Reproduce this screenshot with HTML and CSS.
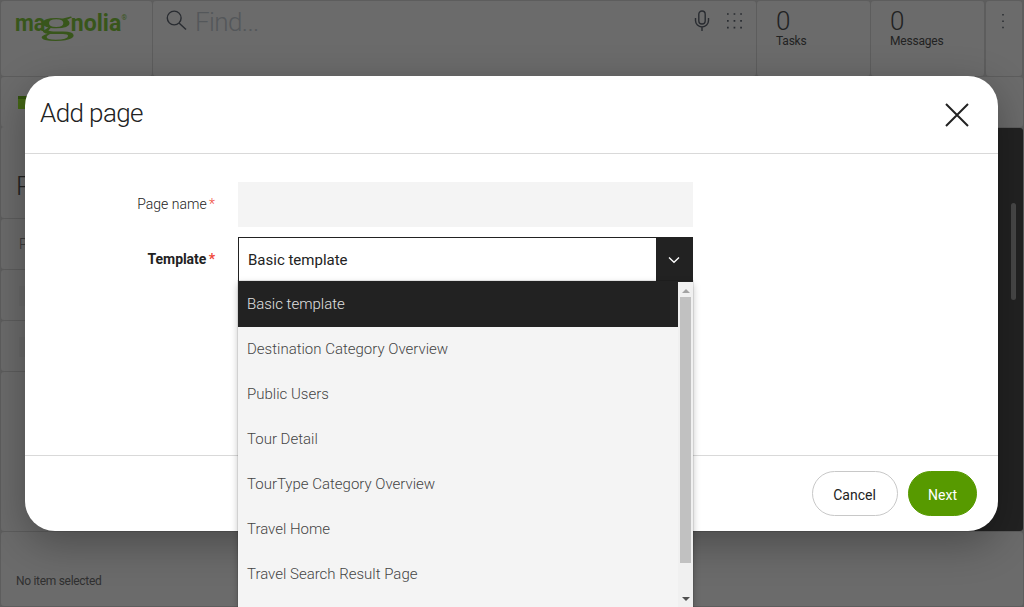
FILE: index.html
```html
<!DOCTYPE html>
<html lang="en">
<head>
<meta charset="utf-8">
<title>Add page</title>
<link rel="stylesheet" href="styles.css">
</head>
<body>
<div class="shell">
  <header class="topbar">
    <div class="tile brand">
      <svg class="logo" width="112" height="32" viewBox="0 0 112 32" role="img" aria-label="magnolia">
        <text class="logo-sans" x="-1" y="19.500" textLength="30.500" lengthAdjust="spacingAndGlyphs">ma</text>
        <text class="logo-serif" transform="translate(22.500 22.500) scale(2.150 1)" x="0" y="0">g</text>
        <text class="logo-sans" x="54.800" y="19.500" textLength="50.500" lengthAdjust="spacingAndGlyphs">nolia</text>
        <text class="logo-mark" x="105.500" y="9">®</text>
      </svg>
    </div>
    <div class="tile search">
      <svg class="search-icon" width="22" height="22" viewBox="0 0 22 22"><circle cx="8.2" cy="8" r="6.9"/><path d="M13 13l7 6.5"/></svg>
      <span class="find">Find...</span>
      <svg class="mic" width="16" height="22" viewBox="0 0 16 22"><rect x="4.8" y="1" width="6.4" height="13" rx="3.2"/><path d="M1.500 8v2.500a6.500 6.500 0 0 0 13 0V8M8 17v4"/></svg>
      <svg class="dots" width="18" height="18" viewBox="0 0 18 18"><path d="M1 2h15M1 8.800h15M1 15.600h15"/></svg>
    </div>
    <div class="tile counter"><span class="num">0</span><span class="cap">Tasks</span></div>
    <div class="tile counter"><span class="num">0</span><span class="cap">Messages</span></div>
    <div class="tile more"><svg width="4" height="18" viewBox="0 0 4 18"><path d="M2 1v15"/></svg></div>
  </header>
  <main class="work">
    <section class="browser">
      <div class="tile tab"><span class="folder"></span></div>
      <div class="tile heading">Pages</div>
      <div class="tile row-head">Page</div>
      <div class="tile row"><span class="check"></span></div>
      <div class="tile row"><span class="check"></span></div>
      <div class="tile rest"></div>
    </section>
    <aside class="side">
      <div class="tile side-top"></div>
      <div class="actions"><span class="thumb"></span></div>
    </aside>
  </main>
  <footer class="tile status">No item selected</footer>
</div>
<div class="overlay">
  <div class="dialog" role="dialog" aria-label="Add page">
    <div class="dialog-head">
      <h1>Add page</h1>
      <svg class="close" width="26" height="26" viewBox="0 0 26 26"><path d="M2 2l22 22M24 2L2 24"/></svg>
    </div>
    <div class="dialog-body">
      <div class="field"><span class="label">Page name <b>*</b></span><div class="input"></div></div>
      <div class="field">
        <span class="label strong">Template <b>*</b></span>
        <div class="select">
          <span class="value">Basic template</span>
          <span class="toggle"><svg width="12" height="8" viewBox="0 0 12 8"><path d="M1 1.500l5 4.800 5-4.800"/></svg></span>
          <div class="menu">
            <ul class="options">
              <li class="active">Basic template</li>
              <li>Destination Category Overview</li>
              <li>Public Users</li>
              <li>Tour Detail</li>
              <li>TourType Category Overview</li>
              <li>Travel Home</li>
              <li>Travel Search Result Page</li>
            </ul>
            <div class="scroll">
              <svg width="8" height="4" viewBox="0 0 8 4"><path class="up" d="M0 4l4-4 4 4z"/></svg>
              <span class="scroll-thumb"></span>
              <svg width="8" height="4" viewBox="0 0 8 4"><path class="down" d="M0 0l4 4 4-4z"/></svg>
            </div>
          </div>
        </div>
      </div>
    </div>
    <div class="dialog-foot">
      <button class="btn cancel">Cancel</button>
      <button class="btn next">Next</button>
    </div>
  </div>
</div>
</body>
</html>
```
FILE: styles.css
```css
* { box-sizing: border-box; }
body { margin: 0; width: 1024px; height: 607px; overflow: hidden; font-family: Roboto, sans-serif; color: #222; }
.shell { height: 607px; padding: 1px; display: flex; flex-direction: column; gap: 1px; background: #5d5d5d; }
.tile { background: #6b6b6b; border-radius: 3px; }
.topbar { display: grid; grid-template-columns: 151px 603px 113px 113px 37px; gap: 1px; height: 75px; }
.more { margin-left: 1px; display: flex; justify-content: center; padding-top: 12px; }
.more svg { margin-right: 2px; }
.brand { padding: 10px 0 0 15px; }
.logo { display: block; overflow: visible; fill: #38561b; }
.logo-sans { font: 700 24px Roboto, sans-serif; }
.logo-serif { font: 400 34px "Liberation Serif", serif; }
.logo-mark { font: 7px Roboto, sans-serif; }
.search { display: flex; align-items: flex-start; padding: 8px 12px 0 13px; }
.search svg, .more svg { fill: none; stroke: #292c31; stroke-width: 1.4; }
.search-icon { margin-top: 1px; }
.find { flex: 1; padding-left: 7px; font-size: 26px; line-height: 27px; font-weight: 300; letter-spacing: -.6px; color: #54575a; }
.search .mic { margin: 1px 16px 0 0; }
.search .dots { margin-top: 3px; stroke-width: 1.7; stroke-dasharray: 1.7 4.900; }
.more svg { stroke-width: 1.5; stroke-dasharray: 1.5 4.900; }
.counter { display: flex; flex-direction: column; padding: 6px 0 0 19px; }
.num { font-size: 26px; line-height: 28px; font-weight: 300; }
.cap { font-size: 12px; line-height: 14px; margin-top: -1px; letter-spacing: -.2px; }
.work { flex: 1; display: flex; }
.browser { flex: 1; display: flex; flex-direction: column; gap: 1px; }
.tab { height: 50px; padding: 19px 17px; margin-bottom: -1px; }
.folder { display: block; width: 14px; height: 13px; background: #446615; border-top: 3px solid #31500d; }
.heading { height: 91px; padding: 44px 15px 0; font-size: 26px; font-weight: 300; }
.row-head { height: 50px; padding: 17px 18px 0; font-size: 14px; font-weight: 300; color: #333; }
.row { height: 50px; padding: 16px 18px; }
.check { display: block; width: 20px; height: 20px; background: #686868; }
.rest { flex: 1; }
.side { width: 228px; display: flex; flex-direction: column; gap: 1px; }
.side-top { height: 50px; }
.actions { flex: 1; display: flex; justify-content: flex-end; padding: 75px 7px 0; background: #222; border-radius: 3px; }
.thumb { width: 5px; height: 97px; border-radius: 3px; background: #484848; }
.status { height: 74px; padding: 42px 15px 0; font-size: 12px; line-height: 14px; letter-spacing: -.3px; color: #303030; }
.overlay { position: absolute; inset: 0; padding: 76px 26px 76px 25px; }
.dialog { height: 455px; border-radius: 30px; background: #fff; box-shadow: 0 12px 40px rgba(0,0,0,.3); display: flex; flex-direction: column; }
.dialog-head { height: 78px; padding: 0 28px 0 15px; border-bottom: 1px solid #d9d9d9; display: flex; align-items: center; justify-content: space-between; }
.dialog-head h1 { margin: -3px 0 0; font-size: 26px; font-weight: 300; letter-spacing: -.6px; }
.close { fill: none; stroke: #222; stroke-width: 2; }
.dialog-body { flex: 1; padding-top: 28px; display: flex; flex-direction: column; gap: 10px; }
.field { display: grid; grid-template-columns: 190px 455px; column-gap: 23px; height: 45px; align-items: center; }
.label { text-align: right; font-size: 14px; font-weight: 300; padding-bottom: 2px; }
.label.strong { font-weight: 700; letter-spacing: -.05px; }
.label b { color: #f0483a; font-weight: inherit; margin-left: -1px; }
.input { height: 45px; background: #f4f4f4; }
.select { position: relative; height: 45px; border: 1px solid #222; display: flex; align-items: center; justify-content: space-between; font-size: 15px; }
.value { padding-left: 9px; }
.toggle { align-self: stretch; width: 36px; display: flex; align-items: center; justify-content: center; background: #222; }
.toggle svg { fill: none; stroke: #fff; stroke-width: 1.3; }
.menu { position: absolute; left: -1px; top: 43px; width: 455px; height: 326px; display: flex; overflow: hidden; background: #f4f4f4; box-shadow: 0 3px 7px rgba(0,0,0,.25), 0 0 0 1px rgba(0,0,0,.08); }
.options { flex: 1; margin: 0; padding: 0; list-style: none; font-weight: 300; }
.options li { height: 45px; padding-left: 9px; line-height: 45px; color: #444; }
.options .active { height: 46px; padding-top: 1px; background: #222; color: #e0e0e0; }
.scroll { width: 15px; padding: 7px 0 6px; background: #f0f0f0; border-top: 1px solid #222; display: flex; flex-direction: column; align-items: center; }
.scroll-thumb { width: 11px; height: 266px; margin: 4px 0 34px; background: #c1c1c1; flex: none; }
.up { fill: #a3a3a3; }
.down { fill: #505050; }
.dialog-foot { height: 76px; border-top: 1px solid #d9d9d9; padding: 15px 21px; display: flex; justify-content: flex-end; gap: 10px; }
.btn { height: 45px; padding: 3px 0 0; border: 1px solid #c8c8c8; border-radius: 23px; font: 14px Roboto, sans-serif; color: #222; background: #fff; }
.cancel { width: 86px; padding-right: 1px; }
.next { width: 69px; background: #579a00; border-color: #579a00; color: #fff; }
```
